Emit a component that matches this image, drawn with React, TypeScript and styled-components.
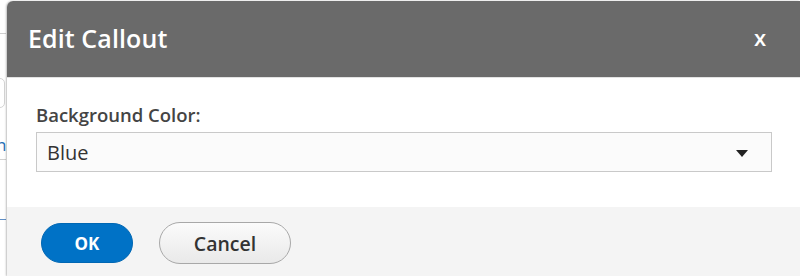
import React from "react";
import styled, { createGlobalStyle } from "styled-components";

const Global = createGlobalStyle`
  html, body { margin: 0; padding: 0; background: #ffffff; }
  body { font-family: "Open Sans", "Liberation Sans", Arial, sans-serif; }
  * { box-sizing: border-box; }
`;

const Screen = styled.div`
  display: flex;
  width: 800px;
  height: 276px;
  overflow: hidden;
  background: #ffffff;
`;

const PageEdge = styled.div`
  width: 7px;
  flex: none;
  display: flex;
  flex-direction: column;
  overflow: hidden;
`;

const EdgeRule = styled.div<{ $top: number; $color: string }>`
  margin-top: ${(p) => p.$top}px;
  height: 1px;
  width: 6px;
  background: ${(p) => p.$color};
`;

const EdgeBox = styled.div`
  margin-top: 44px;
  margin-left: -20px;
  width: 25px;
  height: 30px;
  border: 1px solid #d4d4d4;
  border-radius: 5px;
`;

const EdgeGlyph = styled.div`
  margin-top: 28px;
  margin-left: -4px;
  font-size: 17px;
  line-height: 17px;
  color: #1f6fb5;
`;

const Dialog = styled.div`
  flex: 1;
  margin-top: 1px;
  display: flex;
  flex-direction: column;
  background: #ffffff;
  border-top-left-radius: 6px;
  box-shadow: -1px 0 2px rgba(0, 0, 0, 0.25);
  overflow: hidden;
`;

const Header = styled.div`
  height: 76px;
  flex: none;
  display: flex;
  align-items: center;
  justify-content: space-between;
  padding: 0 34px 0 21px;
  background: #6a6a6a;
  color: #ffffff;
`;

const Title = styled.h1`
  margin: 0 0 3px 0;
  font-size: 25px;
  font-weight: 600;
  letter-spacing: 0.1px;
`;

const Close = styled.button`
  border: none;
  background: none;
  padding: 0;
  margin: 0 0 5px 0;
  color: #ffffff;
  font-family: inherit;
  font-size: 22px;
  font-weight: 600;
  line-height: 22px;
  cursor: pointer;
`;

const Body = styled.div`
  flex: none;
  padding: 25px 28px 35px 29px;
  display: flex;
  flex-direction: column;
  gap: 5px;
  border-top: 1px solid #e2e2e2;
`;

const Label = styled.label`
  font-size: 18.5px;
  line-height: 24px;
  font-weight: 600;
  color: #444444;
`;

const Select = styled.div`
  height: 40px;
  display: flex;
  align-items: center;
  justify-content: space-between;
  padding: 0 23px 0 10px;
  border: 1px solid #c9c9c9;
  background: #fbfbfb;
  font-size: 20px;
  color: #333333;
`;

const Caret = styled.span`
  width: 0;
  height: 0;
  border-left: 6px solid transparent;
  border-right: 6px solid transparent;
  border-top: 7px solid #222222;
  margin-top: 2px;
`;

const Footer = styled.div`
  flex: 1;
  display: flex;
  align-items: flex-start;
  gap: 26px;
  padding: 16px 0 0 34px;
  background: #f4f4f4;
`;

const Button = styled.button<{ $primary?: boolean }>`
  height: ${(p) => (p.$primary ? 40 : 42)}px;
  width: ${(p) => (p.$primary ? 92 : 132)}px;
  margin-top: ${(p) => (p.$primary ? 0 : -1)}px;
  border-radius: 21px;
  border: 1px solid ${(p) => (p.$primary ? "#0067b3" : "#a8a8a8")};
  background: ${(p) =>
    p.$primary ? "#0072c6" : "linear-gradient(#fbfbfb, #e9e9e9)"};
  color: ${(p) => (p.$primary ? "#ffffff" : "#333333")};
  font-family: inherit;
  font-size: ${(p) => (p.$primary ? 17 : 19.5)}px;
  font-weight: ${(p) => (p.$primary ? 700 : 600)};
  cursor: pointer;
  padding: 0;
`;

export default function App() {
  return (
    <>
      <Global />
      <Screen>
        <PageEdge>
          <EdgeRule $top={33} $color="#cfcfcf" />
          <EdgeBox />
          <EdgeGlyph>n</EdgeGlyph>
          <EdgeRule $top={6} $color="#d0d0d0" />
          <EdgeRule $top={59} $color="#5f8fc6" />
        </PageEdge>
        <Dialog>
          <Header>
            <Title>Edit Callout</Title>
            <Close>x</Close>
          </Header>
          <Body>
            <Label>Background Color:</Label>
            <Select>
              <span>Blue</span>
              <Caret />
            </Select>
          </Body>
          <Footer>
            <Button $primary>OK</Button>
            <Button>Cancel</Button>
          </Footer>
        </Dialog>
      </Screen>
    </>
  );
}
